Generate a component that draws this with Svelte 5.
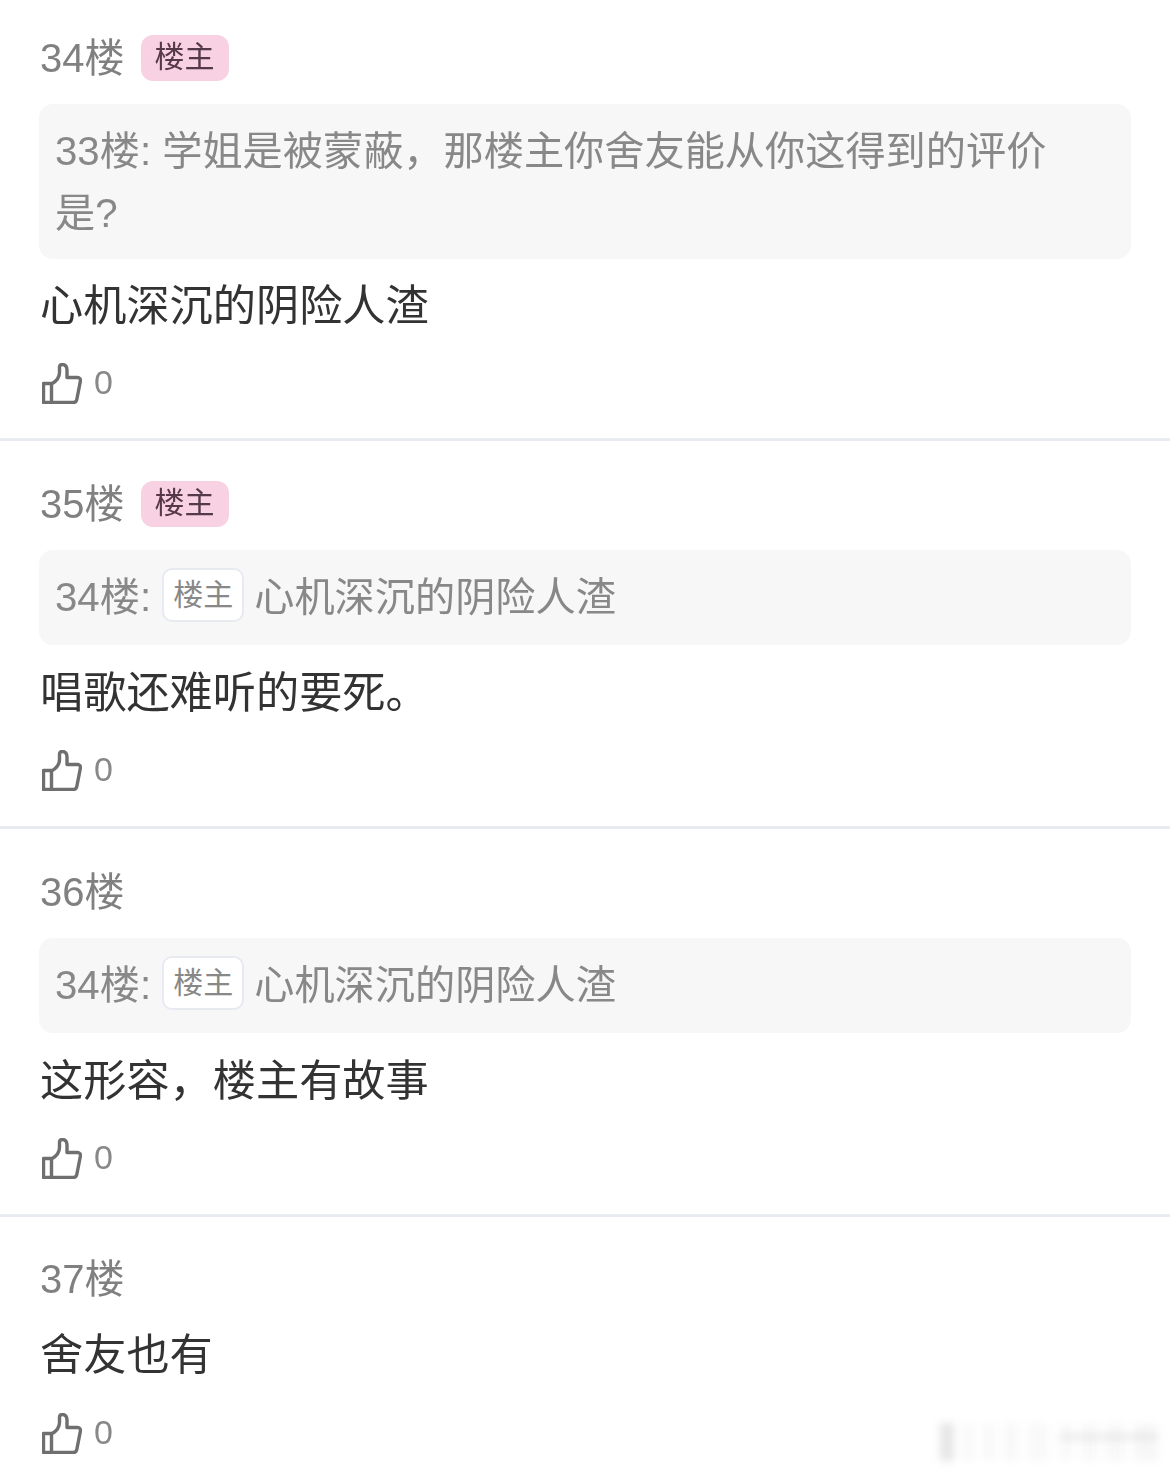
<script lang="ts">
  type Post = { floor: number; op?: boolean; quote?: { floor: number; op?: boolean; text: string }; body: string; likes: number };

  const posts: Post[] = [
    { floor: 34, op: true, quote: { floor: 33, text: '学姐是被蒙蔽，那楼主你舍友能从你这得到的评价是?' }, body: '心机深沉的阴险人渣', likes: 0 },
    { floor: 35, op: true, quote: { floor: 34, op: true, text: '心机深沉的阴险人渣' }, body: '唱歌还难听的要死。', likes: 0 },
    { floor: 36, quote: { floor: 34, op: true, text: '心机深沉的阴险人渣' }, body: '这形容，楼主有故事', likes: 0 },
    { floor: 37, body: '舍友也有', likes: 0 }
  ];

  // smudge left over from a removed watermark
  const smudges = [
    { w: 14, o: 0.32 }, { w: 8, o: 0.1 }, { w: 14, o: 0.07 }, { w: 12, o: 0.1 },
    { w: 22, o: 0.07 }, { w: 14, o: 0.07 }, { w: 14, o: 0.09 }, { w: 18, o: 0.09 }, { w: 24, o: 0.1 }
  ];
</script>

<main class="thread">
  {#each posts as post (post.floor)}
    <article class="post">
      <header class="head">
        <span class="floor">{post.floor}楼</span>
        {#if post.op}<span class="op">楼主</span>{/if}
      </header>
      {#if post.quote}
        <blockquote class="quote">
          {post.quote.floor}楼: {#if post.quote.op}<span class="quote-op">楼主</span>{/if}{post.quote.text}
        </blockquote>
      {/if}
      <p class="body">{post.body}</p>
      <div class="like">
        <svg width="40" height="41" viewBox="0 0 40 41" fill="none" stroke="currentColor" stroke-width="3.4" stroke-linejoin="round" stroke-linecap="round">
          <path d="M9.5 20.5H1.5V39.5H9.5" />
          <path d="M9.5 39.5V21C14 18.5 17.5 14.5 17.5 9.5V4C17.5 2 19 1.5 20.5 1.5C23.5 1.5 25 4 25 7V14.5H35.5C37.5 14.5 38.8 16 38.4 18L34.8 36.5C34.4 38.5 33 39.5 31 39.5Z" />
        </svg>
        <span>{post.likes}</span>
      </div>
    </article>
  {/each}
  <div class="smudge">
    {#each smudges as s}
      <i style="width:{s.w}px;opacity:{s.o}"></i>
    {/each}
    <b></b>
  </div>
</main>

<style>
  :global(body) {
    background: #fff;
  }
  .thread {
    position: relative;
    height: 1473px;
    overflow: hidden;
    font-family: "Liberation Sans", "Noto Sans CJK SC", sans-serif;
    filter: blur(0.5px);
  }
  .post {
    padding: 40px 39px 35px 40px;
    border-top: 3px solid #e9ebf3;
  }
  .post:first-child {
    padding-top: 35px;
    padding-bottom: 34px;
    border-top: 0;
  }
  .post:last-of-type {
    padding-top: 39px;
  }
  .head {
    display: flex;
    align-items: center;
    height: 46px;
    gap: 16px;
  }
  .floor {
    margin-top: -6px;
    font-size: 40px;
    color: #808080;
  }
  .op {
    width: 88px;
    height: 46px;
    line-height: 44px;
    text-align: center;
    font-size: 30px;
    color: #55384a;
    background: #f8d1e2;
    border-radius: 12px;
  }
  .quote {
    margin: 23px 0 0 -1px;
    padding: 17px 71px 16px 16px;
    font-size: 40.2px;
    line-height: 62px;
    color: #888;
    background: #f7f7f8;
    border-radius: 14px;
  }
  .post:first-child .quote {
    padding-bottom: 14px;
  }
  .quote-op {
    display: inline-block;
    box-sizing: border-box;
    width: 82px;
    height: 54px;
    line-height: 49px;
    margin: 0 10px 0 0;
    text-align: center;
    vertical-align: top;
    position: relative;
    top: 1px;
    font-size: 30px;
    color: #888;
    background: #fff;
    border: 2px solid #e8eaf2;
    border-radius: 10px;
  }
  .body {
    margin: 17px 0 0;
    font-size: 43.2px;
    line-height: 62px;
    color: #333;
  }
  .post:first-child .body {
    margin-top: 16px;
  }
  .post:last-of-type .body {
    margin-top: 22px;
  }
  .like {
    display: flex;
    align-items: center;
    gap: 12px;
    margin-top: 26px;
    margin-left: 2px;
    height: 41px;
    font-size: 34px;
    color: #6f6f6f;
  }
  .post:last-of-type .like {
    margin-top: 27px;
  }
  .like span {
    color: #888;
    position: relative;
    top: -1px;
  }
  .smudge {
    position: absolute;
    right: 12px;
    bottom: 12px;
    width: 218px;
    height: 38px;
    display: flex;
    justify-content: space-between;
    filter: blur(4px);
  }
  .smudge i {
    display: block;
    background: #b0b0b0;
  }
  .smudge b {
    position: absolute;
    top: 12px;
    left: 120px;
    right: 0;
    height: 4px;
    background: #b0b0b0;
    opacity: 0.35;
  }
</style>
